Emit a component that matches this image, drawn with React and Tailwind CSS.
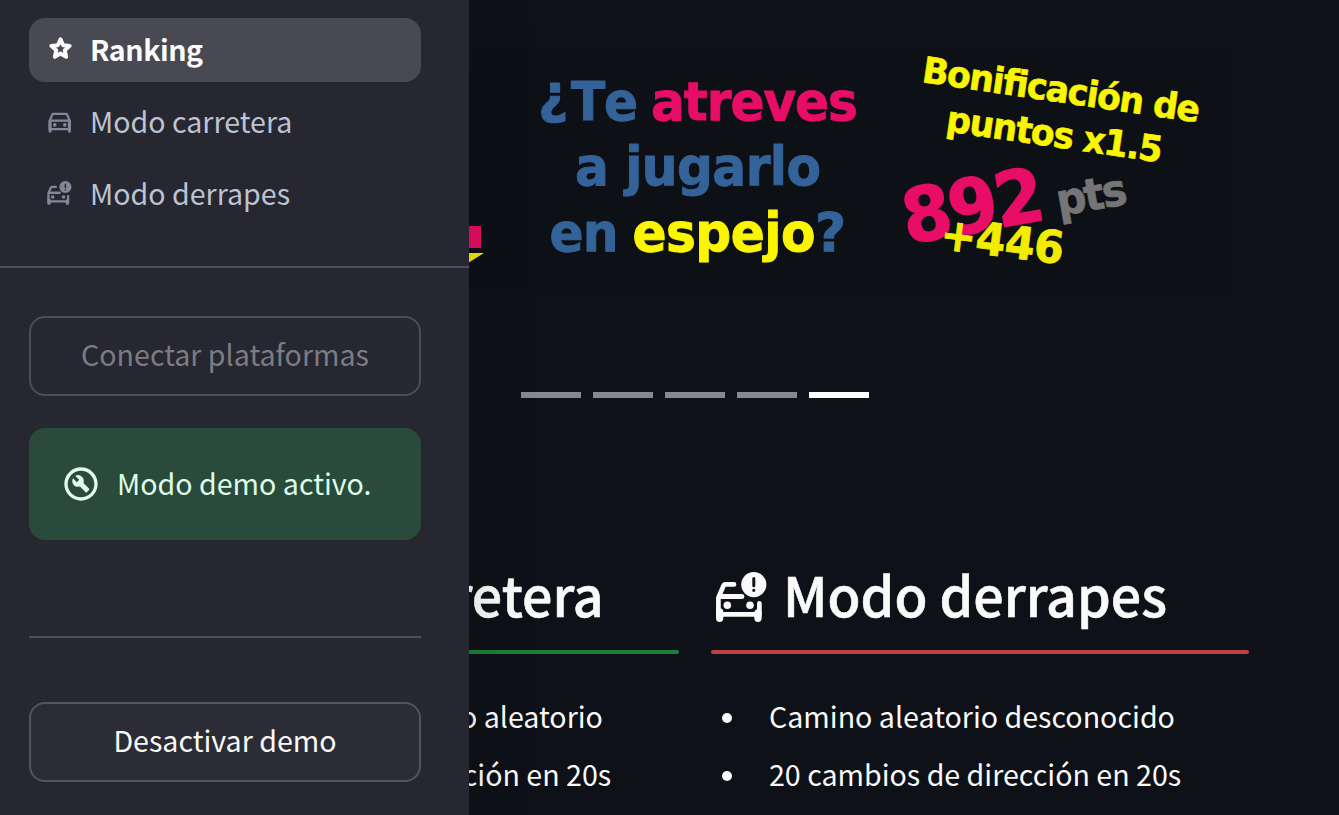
import { MdOutlineBuildCircle } from "react-icons/md";

function StarIcon({ className }) {
  return (
    <svg viewBox="0 0 24 24" className={className} fill="none" stroke="currentColor" strokeWidth="3.8" strokeLinejoin="round">
      <path d="M12 3.2l2.55 5.65 6.25.65-4.7 4.2 1.35 6.3L12 16.8 6.55 20l1.35-6.3-4.7-4.2 6.25-.65z" />
    </svg>
  );
}

function CarIcon({ className }) {
  return (
    <svg viewBox="0 0 24 24" className={className} fill="none" stroke="currentColor">
      <path d="M1.6 11L4.6 3.9h14.2L21.9 11M1.6 10.6h20.3v8.6H1.6z" strokeWidth="2.2" strokeLinejoin="round" />
      <path d="M2.1 12v9.2M21.4 12v9.2" strokeWidth="3" strokeLinecap="round" />
      <circle cx="6.8" cy="14.9" r="1.8" fill="currentColor" stroke="none" />
      <circle cx="16.8" cy="14.9" r="1.8" fill="currentColor" stroke="none" />
    </svg>
  );
}

function CarAlertIcon({ className }) {
  return (
    <svg viewBox="0 0 51 50" className={className} fill="none" stroke="currentColor">
      <path d="M18 12.4H9.6Q8 12.4 7.4 14L2.4 25.6V42.4H43.4V31.4" strokeWidth="4.7" strokeLinecap="round" strokeLinejoin="round" />
      <path d="M4 24.5H25.8" strokeWidth="5" strokeLinecap="round" />
      <path d="M3.65 40V46.3M42 41V46.3" strokeWidth="7.3" strokeLinecap="round" />
      <circle cx="11.3" cy="33.3" r="3.8" fill="currentColor" stroke="none" />
      <circle cx="34" cy="33.3" r="3.8" fill="currentColor" stroke="none" />
      <path
        fill="currentColor"
        stroke="none"
        fillRule="evenodd"
        d="M37.8 0a12.6 12.6 0 1 0 0 25.2a12.6 12.6 0 1 0 0-25.2zM36.3 6.6a1.5 1.5 0 0 1 3 0v7.2a1.5 1.5 0 0 1-3 0zM37.8 16.7a1.6 1.6 0 1 1 0 3.2a1.6 1.6 0 1 1 0-3.2z"
      />
    </svg>
  );
}

function NavItem({ icon, label, active }) {
  return (
    <a
      className={
        active
          ? "flex h-16 items-center rounded-2xl bg-[#484953] pb-0.5 font-bold tracking-[-0.45px] text-[#fafafa]"
          : "flex h-16 items-center rounded-2xl pb-0.5 text-[#bdc3d1]"
      }
    >
      <span className={active ? "ml-[18px] flex w-[43px]" : "ml-[18px] flex w-[43px] text-[#838798]"}>{icon}</span>
      {label}
    </a>
  );
}

// A run of poster lettering, slightly condensed and set to a given width.
function Lettering({ x, y, w, size, fill, rotate = 0, squeeze = 0.93, children }) {
  return (
    <text
      transform={`translate(${x} ${y}) rotate(${rotate}) scale(${squeeze} 1)`}
      fontSize={size}
      fill={fill}
      stroke={fill}
      strokeWidth={size / 55}
      textLength={w ? w / squeeze : undefined}
      lengthAdjust="spacing"
    >
      {children}
    </text>
  );
}

function Poster() {
  return (
    <svg
      viewBox="0 0 1108 392"
      className="block h-[392px] w-full font-bold [font-family:'DejaVu_Sans',sans-serif]"
    >
      <rect x="0" y="48" width="1090" height="244" fill="#0d1116" />
      <path d="M310 226H340V248H310Z" fill="#e60d63" />
      <path d="M310 253H343L327 263H310Z" fill="#f0ea00" />
      <Lettering x={397} y={112} size={54} squeeze={0.97} fill="#336399">¿</Lettering>
      <Lettering x={430} y={120} w={67} size={54} fill="#336399">Te</Lettering>
      <Lettering x={510} y={120} w={207} size={54} fill="#e80d67">atreves</Lettering>
      <Lettering x={434} y={185} w={246} size={54} fill="#336399">a jugarlo</Lettering>
      <Lettering x={408.5} y={251} w={69} size={54} fill="#336399">en</Lettering>
      <Lettering x={491.5} y={251} w={183} size={54} fill="#faf500">espejo</Lettering>
      <Lettering x={674} y={251} size={54} squeeze={1} fill="#336399">?</Lettering>
      <Lettering x={780} y={82} w={280} size={36} squeeze={0.96} rotate={8.3} fill="#faf500">Bonificación de</Lettering>
      <Lettering x={804} y={131} w={218} size={36} squeeze={0.96} rotate={8.3} fill="#faf500">puntos x1.5</Lettering>
      <Lettering x={766} y={244} w={143} size={75} squeeze={0.95} rotate={-10} fill="#e80d67">892</Lettering>
      <Lettering x={918} y={216} w={71} size={44} squeeze={0.95} rotate={-10} fill="#757575">pts</Lettering>
      <Lettering x={798} y={249} w={124} size={45} squeeze={0.95} rotate={7} fill="#f2ed00">+446</Lettering>
    </svg>
  );
}

function Mode({ title, icon, rule, list, items }) {
  return (
    <section className="w-[538px]">
      <h2 className="mb-[18px] flex h-[70px] items-center whitespace-nowrap pl-[5px] text-[53.7px] font-medium leading-[60px]">
        {icon}
        <span className="ml-[16px] -translate-y-[3px] [-webkit-text-stroke:0.6px_#fafafa]">{title}</span>
      </h2>
      <div className={rule} />
      <ul className={list}>
        {items.map((item) => (
          <li key={item} className="flex items-center whitespace-nowrap">
            <span className="ml-[11px] mr-[37px] size-[10px] translate-y-0.5 rounded-full bg-[#fafafa]" />
            {item}
          </li>
        ))}
      </ul>
    </section>
  );
}

export default function App() {
  return (
    <div className="relative h-[815px] w-[1339px] overflow-hidden bg-[#0e1117] text-[#fafafa] [font-family:'Noto_Sans_CJK_SC','Noto_Sans',sans-serif]">
      <main className="ml-[141px] w-[1108px]">
        <Poster />
        <div className="flex justify-center gap-3">
          <span className="h-1.5 w-[60px] bg-[#87888b]" />
          <span className="h-1.5 w-[60px] bg-[#87888b]" />
          <span className="h-1.5 w-[60px] bg-[#87888b]" />
          <span className="h-1.5 w-[60px] bg-[#87888b]" />
          <span className="h-1.5 w-[60px] bg-white" />
        </div>
        <div className="mt-[164px] flex gap-8">
          <Mode
            title="Modo carretera"
            icon={<CarIcon className="h-[50px] w-[52px]" />}
            rule="h-1 rounded-full bg-[#1a8038]"
            list="mt-[33px] text-[28.6px] leading-[58px] [&>li:first-child]:-ml-0.5"
            items={["Camino desconocido aleatorio", "20 cambios de dirección en 20s"]}
          />
          <Mode
            title="Modo derrapes"
            icon={<CarAlertIcon className="h-[50px] w-[51px]" />}
            rule="h-1 rounded-full bg-[#bd4043]"
            list="mt-[33px] text-[28.6px] leading-[58px]"
            items={["Camino aleatorio desconocido", "20 cambios de dirección en 20s"]}
          />
        </div>
      </main>

      <aside className="absolute inset-y-0 left-0 w-[469px] bg-[#262730] text-[28.6px] leading-[48px] shadow-[0_0_64px_0_rgba(0,0,0,0.16)]">
        <nav className="flex flex-col gap-2 pl-[29px] pr-12 pt-[18px]">
          <NavItem active label="Ranking" icon={<StarIcon className="ml-px size-[25px] -translate-y-px" />} />
          <NavItem label="Modo carretera" icon={<CarIcon className="ml-px size-6 translate-y-px" />} />
          <NavItem label="Modo derrapes" icon={<CarAlertIcon className="h-6 w-[25px]" />} />
        </nav>
        <div className="mt-10 h-0.5 bg-[#4c4d56]" />
        <div className="flex flex-col pl-[29px] pr-12 pt-12">
          <button className="h-20 rounded-2xl border-2 border-[#4c4d56] pb-[5px] text-[#7c7d83]">Conectar plataformas</button>
          <div className="mt-8 flex h-28 items-center rounded-2xl bg-[#2a4a3b] pl-8 text-[#dffde9]">
            <MdOutlineBuildCircle className="mr-[16px] size-10" />
            <span className="pb-0.5">Modo demo activo.</span>
          </div>
          <div className="mt-24 h-0.5 bg-[#4c4d56]" />
          <button className="mt-16 h-20 rounded-2xl border-2 border-[#53545d] bg-[#2b2c36] pb-[5px]">Desactivar demo</button>
        </div>
      </aside>
    </div>
  );
}
